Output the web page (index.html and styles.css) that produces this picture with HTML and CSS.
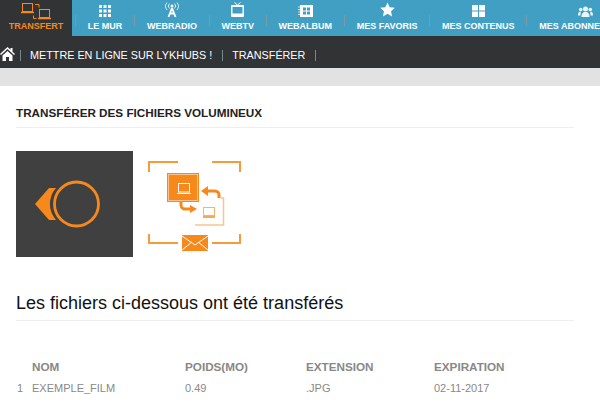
FILE: index.html
```html
<!DOCTYPE html>
<html lang="fr">
  <head>
    <meta charset="UTF-8" />
    <title>Transfert</title>
    <link rel="stylesheet" href="styles.css">
  </head>
  <body>
    <nav class="menu">
        <a class="menu-item active">
            <svg class="ico" width="31" height="17" viewBox="0 0 31 17" fill="none" stroke="#f7891c">
                <rect x="1.500" y="0.500" width="10" height="8"/>
                <path d="M0 9.500h13M4 8.500v1M9 8.500v1" stroke-width="1.500"/>
                <rect x="18.500" y="6.500" width="10" height="8"/>
                <path d="M17 15.500h13M21 14.500v1M26 14.500v1" stroke-width="1.500"/>
                <path d="M14 1.500h4v3M15.500 15.500h-3v-3"/>
            </svg>
            <span>TRANSFERT</span>
        </a>
        <span class="sep first"></span>
        <a class="menu-item">
            <svg class="ico" width="12" height="12" viewBox="0 0 12 12" fill="#fff">
                <path d="M0 0h3v3H0zM4.500 0h3v3h-3zM9 0h3v3H9zM0 4.500h3v3H0zM4.500 4.500h3v3h-3zM9 4.500h3v3H9zM0 9h3v3H0zM4.500 9h3v3h-3zM9 9h3v3H9z"/>
            </svg>
            <span>LE MUR</span>
        </a>
        <span class="sep"></span>
        <a class="menu-item">
            <svg class="ico" width="14" height="15" viewBox="0 0 14 15" fill="none" stroke="#fff">
                <path d="M7 6L3.500 15M7 6l3.500 9M5 11.500h4" stroke-width="1.800"/>
                <circle cx="7" cy="4" r="1.500" fill="#fff" stroke="none"/>
                <path d="M4.500 6.500a3.500 3.500 0 0 1 0-5M9.500 6.500a3.500 3.500 0 0 0 0-5M2 8a6 6 0 0 1 0-7.500M12 8a6 6 0 0 0 0-7.500" opacity=".8"/>
            </svg>
            <span>WEBRADIO</span>
        </a>
        <span class="sep"></span>
        <a class="menu-item">
            <svg class="ico" width="13" height="15" viewBox="0 0 13 15" fill="#fff">
                <path d="M3.500.5l3 2.500 3-2.500" fill="none" stroke="#fff"/>
                <path fill-rule="evenodd" d="M1 3h11a1 1 0 0 1 1 1v10a1 1 0 0 1-1 1H1a1 1 0 0 1-1-1V4a1 1 0 0 1 1-1zm.5 2v6.500h10V5z"/>
            </svg>
            <span>WEBTV</span>
        </a>
        <span class="sep"></span>
        <a class="menu-item">
            <svg class="ico" width="15" height="12" viewBox="0 0 15 12" fill="#fff">
                <path fill-rule="evenodd" d="M2 0h13v12H2zM5 2.500v3h3v-3zM5 6.500v3h3v-3zM9 2.500v3h3v-3zM9 6.500v3h3v-3z"/>
                <path d="M0 1.500h3v1H0zM0 4h3v1H0zM0 6.500h3v1H0zM0 9h3v1H0z" opacity=".7"/>
            </svg>
            <span>WEBALBUM</span>
        </a>
        <span class="sep"></span>
        <a class="menu-item">
            <svg class="ico" width="15" height="15" viewBox="0 0 20 20" fill="#fff">
                <path d="M10 .5l2.900 6.400 6.900.8-5.100 4.700 1.400 6.900L10 15.800l-6.100 3.500 1.400-6.900L.2 7.700l6.900-.8z"/>
            </svg>
            <span>MES FAVORIS</span>
        </a>
        <span class="sep"></span>
        <a class="menu-item">
            <svg class="ico" width="13" height="12" viewBox="0 0 13 12" fill="#fff">
                <path d="M0 0h6v5.500H0zM7 0h6v5.500H7zM0 6.500h6V12H0zM7 6.500h6V12H7z"/>
            </svg>
            <span>MES CONTENUS</span>
        </a>
        <span class="sep"></span>
        <a class="menu-item">
            <svg class="ico" width="15" height="11" viewBox="0 0 15 11" fill="#fff" opacity=".9">
                <circle cx="7.500" cy="3" r="2.500"/>
                <path d="M3.500 11c0-3 1-5 4-5s4 2 4 5z"/>
                <circle cx="2.700" cy="3.500" r="1.800"/>
                <circle cx="12.300" cy="3.500" r="1.800"/>
                <path d="M0 9.500c0-2.500.7-4 2.700-4L2.500 9.500zM15 9.500c0-2.500-.7-4-2.700-4l.2 4z"/>
            </svg>
            <span>MES ABONNEMENTS</span>
        </a>
    </nav>

    <div class="crumbs">
        <svg class="home" width="15" height="14" viewBox="0 0 15 14" fill="#fff">
            <path d="M7.500 0L0 7l1 1 6.500-6 6.500 6 1-1-2.500-2.300V1h-2v1.800z"/>
            <path d="M2.500 8.500L7.500 4l5 4.500V14H9V10H6v4H2.500z"/>
        </svg>
        <span class="crumb-sep first"></span>
        <a>METTRE EN LIGNE SUR LYKHUBS !</a>
        <span class="crumb-sep"></span>
        <a>TRANSFÉRER</a>
        <span class="crumb-sep"></span>
    </div>

    <div class="strip"></div>

    <main class="content">
        <h1 class="title">TRANSFÉRER DES FICHIERS VOLUMINEUX</h1>

        <div class="visuals">
            <div class="player">
                <svg width="65" height="48" viewBox="0 0 65 48" fill="none">
                    <path d="M0 24L14 8h7a24 24 0 0 0 0 32h-7z" fill="#f7891c"/>
                    <circle cx="41.500" cy="24" r="22" stroke="#f7891c" stroke-width="2.800"/>
                </svg>
            </div>
            <svg class="transfer" width="94" height="92" viewBox="0 0 94 92" fill="none" stroke="#f99a3a" stroke-width="2">
                <path d="M1 12V2h29M64 2h28v10M1 74v9h29M64 83h28v-9"/>
                <path d="M73 38h2.500v27H47" stroke="#fbc48e" stroke-width="1.500"/>
                <rect x="19" y="13" width="32" height="29" fill="#f7891c" stroke="none"/>
                <rect x="20.500" y="14.500" width="29" height="26" stroke="#fbc48e" stroke-width="1"/>
                <rect x="30.500" y="23.500" width="11" height="8.500" stroke="#fff" stroke-width="1"/>
                <path d="M29 33.500h14" stroke="#fff" stroke-width="1"/>
                <path d="M71 38v-3a4 4 0 0 0-4-4H58" stroke="#f7891c" stroke-width="3"/>
                <path d="M60 26l-7 5 7 5z" fill="#f7891c" stroke="none"/>
                <path d="M33 42v3a4 4 0 0 0 4 4h7" stroke="#f7891c" stroke-width="3"/>
                <path d="M42 45l7 4-7 4z" fill="#f7891c" stroke="none"/>
                <rect x="55.500" y="47.500" width="11" height="8" stroke="#fbb26e" stroke-width="1"/>
                <path d="M55 57h12" stroke="#f7891c" stroke-width="1.500"/>
                <rect x="34" y="75" width="26" height="16" fill="#f7891c" stroke="none"/>
                <path d="M34 76l13 9 13-9M34 90l10-8M60 90l-10-8" stroke="#fff" stroke-width="1"/>
            </svg>
        </div>

        <h2 class="subtitle">Les fichiers ci-dessous ont été transférés</h2>

        <div class="files">
            <span></span>
            <b>NOM</b>
            <b>POIDS(MO)</b>
            <b>EXTENSION</b>
            <b>EXPIRATION</b>
            <span>1</span>
            <span>EXEMPLE_FILM</span>
            <span>0.49</span>
            <span>.JPG</span>
            <span>02-11-2017</span>
        </div>
    </main>
  </body>
</html>
```

FILE: styles.css
```css
* {
  margin: 0;
  padding: 0;
  box-sizing: border-box;
}

html, body {
  height: 405px;
  overflow: hidden;
}

body {
  width: 600px;
  background: #fff;
  font-family: "Liberation Sans", Arial, sans-serif;
}

.menu {
  display: flex;
  height: 36px;
  background: #429fc4;
  overflow: hidden;
}

.menu-item {
  display: flex;
  flex-direction: column;
  align-items: center;
  justify-content: flex-end;
  flex: none;
  height: 36px;
  padding: 0 11.800px 4px;
  color: #fff;
  font-size: 9px;
  font-weight: bold;
  line-height: 12px;
  white-space: nowrap;
}

.menu-item .ico {
  display: block;
  flex: none;
  margin-bottom: 3px;
}

.menu-item.active {
  width: 72px;
  padding: 0 0 4px;
  background: #323335;
  color: #f7891c;
}

.menu-item.active .ico {
  margin-bottom: 0;
}

.sep {
  flex: none;
  width: 1px;
  height: 11px;
  margin-top: 15px;
  background: #7c9aa6;
}

.sep.first {
  margin-left: 3px;
}

.crumbs {
  display: flex;
  align-items: center;
  height: 32px;
  padding-top: 6px;
  background: #323335;
  color: #fff;
  font-size: 10.800px;
}

.home {
  flex: none;
  margin-bottom: 2px;
}

.crumb-sep {
  flex: none;
  width: 1px;
  height: 11px;
  margin: 0 9px 0 10px;
  background: #6f8a8c;
}

.crumb-sep.first {
  margin-left: 5px;
}

.strip {
  height: 18px;
  background: #e2e2e2;
}

.content {
  padding: 0 26px 0 16px;
}

.title {
  margin-top: 19px;
  padding-bottom: 7px;
  border-bottom: 1px solid #eee;
  color: #222;
  font-size: 11.700px;
  font-weight: bold;
  line-height: 15px;
}

.visuals {
  display: flex;
  margin-top: 23px;
}

.player {
  display: flex;
  align-items: center;
  width: 117px;
  height: 106px;
  padding-left: 19px;
  background: #404040;
}

.transfer {
  margin: 9px 0 0 15px;
}

.subtitle {
  margin-top: 36px;
  padding-bottom: 7px;
  border-bottom: 1px solid #eee;
  color: #111;
  font-size: 18px;
  font-weight: normal;
  line-height: 20px;
}

.files {
  display: grid;
  grid-template-columns: 16px 153px 121px 128px 1fr;
  row-gap: 7px;
  margin-top: 39px;
  color: #888;
  font-size: 11px;
  line-height: 14px;
}

.files b {
  font-size: 11.700px;
}

.files span:nth-child(6) {
  padding-left: 1px;
}
```
